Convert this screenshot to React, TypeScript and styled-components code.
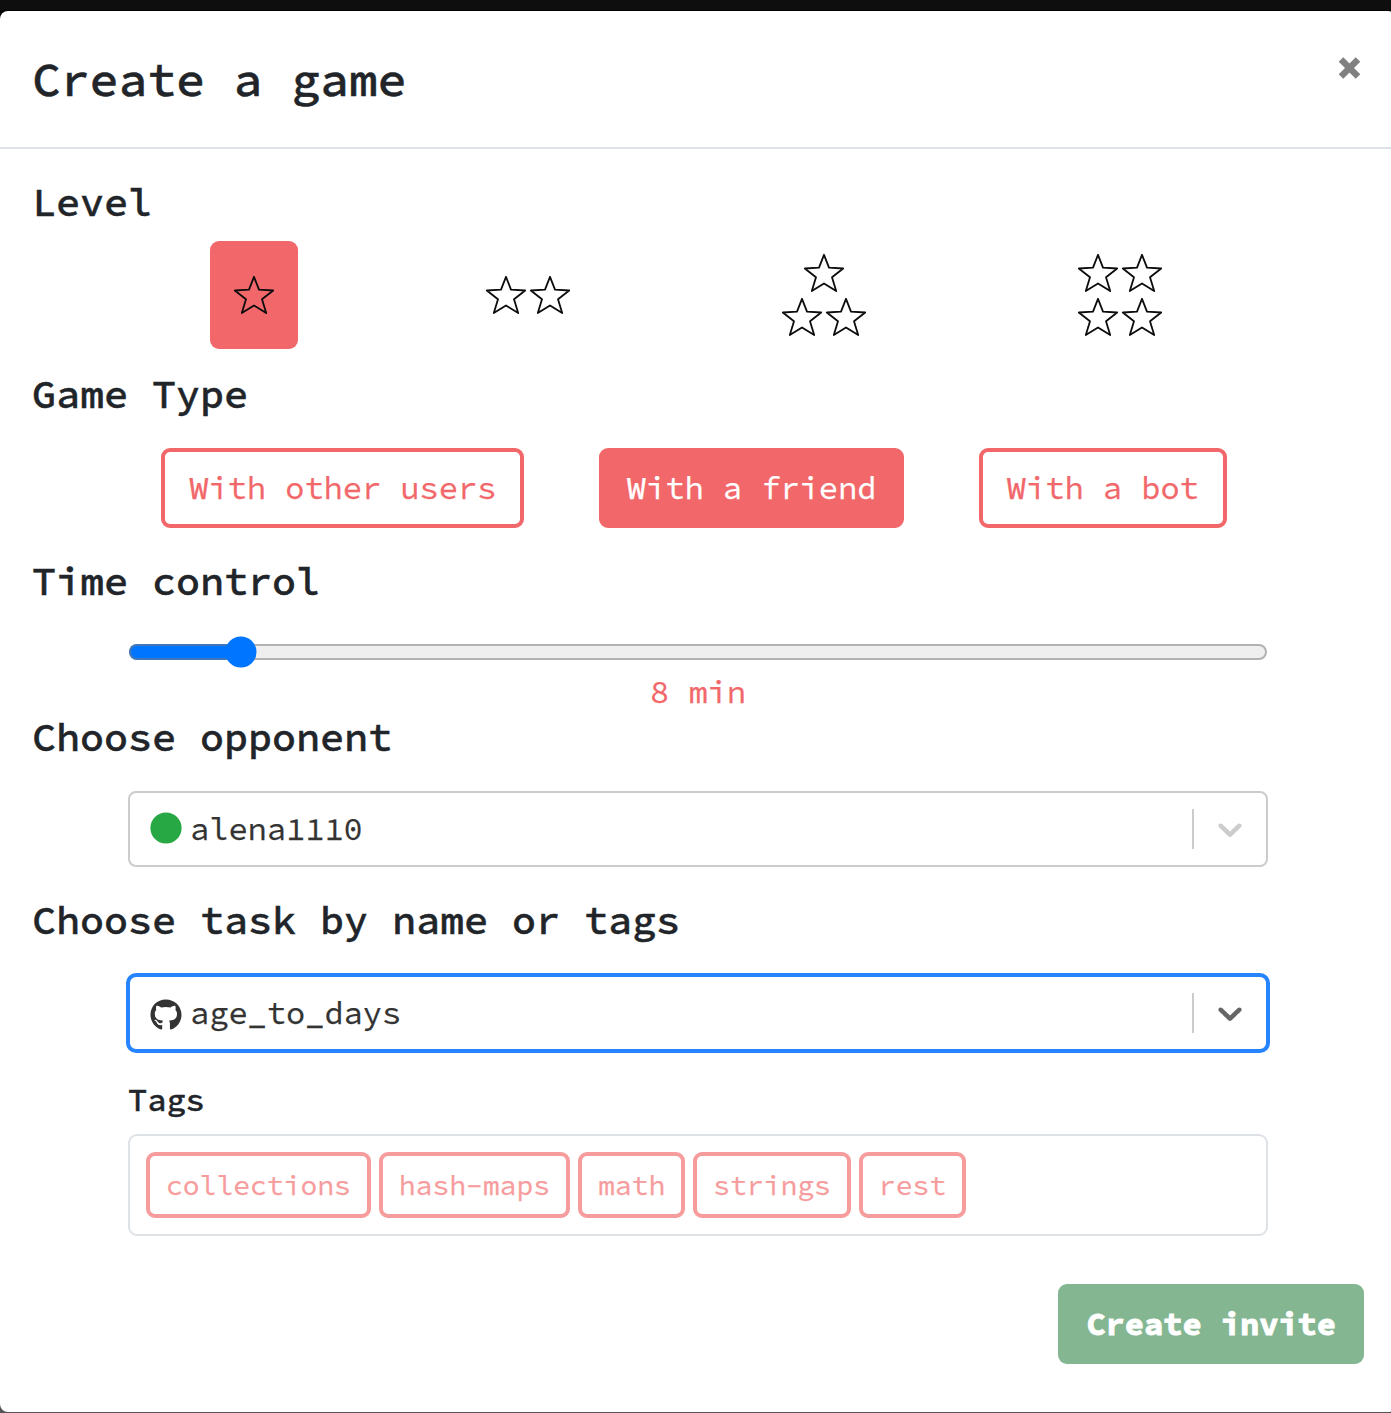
import React, { useState } from "react";
import styled, { createGlobalStyle, css } from "styled-components";

const RED = "#f2686a";
const INK = "#212529";

const GlobalStyle = createGlobalStyle`
  *, *::before, *::after { box-sizing: border-box; }
  html, body { margin: 0; padding: 0; }
  body {
    background: #0e0e0e;
    overflow: hidden;
    color: ${INK};
  }
  button { font: inherit; margin: 0; cursor: pointer; }
`;

const mono = (size: number, stroke = 0.25) => css`
  font-family: "Source Code Pro", "DejaVu Sans Mono", "Liberation Mono", monospace;
  font-size: ${size}px;
  white-space: pre;
  -webkit-text-stroke: ${stroke}px currentColor;
`;

const Page = styled.div`
  width: 1391px;
  height: 1413px;
  overflow: hidden;
  padding-top: 11px;
  background: linear-gradient(#0e0e0e 0 10px, #050305 10px 60px, #555 60px);
`;

const Dialog = styled.section`
  display: flex;
  flex-direction: column;
  width: 1396px;
  height: 1401px;
  background: #fff;
  border-radius: 8px;
`;

const Header = styled.header`
  display: flex;
  justify-content: space-between;
  align-items: flex-start;
  height: 138px;
  padding: 32px 34px 0 32px;
  border-bottom: 2px solid #dee2e6;
`;

const Title = styled.h1`
  ${mono(48, 0.5)}
  margin: 0;
  line-height: 72px;
  font-weight: 500;
`;

const CloseButton = styled.button`
  display: flex;
  margin-top: 13px;
  padding: 0;
  border: 0;
  background: none;
  color: #808080;
`;

const Body = styled.div`
  flex: 1;
  padding: 29px 32px 0;
`;

const Heading = styled.h2<{ $top?: number }>`
  ${mono(40, 0.5)}
  margin: ${(p) => p.$top ?? 0}px 0 0;
  line-height: 48px;
  font-weight: 500;
`;

const Field = styled.div<{ $top: number }>`
  margin: ${(p) => p.$top}px 96px 0;
`;

const Levels = styled(Field)`
  display: flex;
  justify-content: space-around;
`;

const LevelButton = styled.button<{ $active: boolean; $wide: boolean }>`
  display: flex;
  flex-wrap: wrap;
  justify-content: center;
  align-content: center;
  width: ${(p) => (p.$wide ? 132 : 88)}px;
  height: 108px;
  padding: 10px 22px;
  border: 0;
  border-radius: 9px;
  background: ${(p) => (p.$active ? RED : "transparent")};
`;

const LineBreak = styled.span`
  flex-basis: 100%;
`;

const GameTypes = styled.div`
  display: flex;
  justify-content: space-around;
  margin: 30px 100px 0 92px;
`;

const TypeButton = styled.button<{ $active: boolean }>`
  ${mono(32)}
  height: 80px;
  padding: 0 24px;
  border: 4px solid ${RED};
  border-radius: 9px;
  line-height: 72px;
  color: ${(p) => (p.$active ? "#fff" : RED)};
  background: ${(p) => (p.$active ? RED : "#fff")};
`;

const Slider = styled.div`
  display: flex;
  align-items: center;
  height: 32px;
  padding: 0 1px;
`;

const Track = styled.div`
  display: flex;
  align-items: center;
  width: 100%;
  height: 16px;
  border: 2px solid #b2b2b2;
  border-radius: 8px;
  background: #efefef;
`;

const TrackFill = styled.div`
  flex: none;
  height: 16px;
  margin-left: -2px;
  border: 2px solid #3f78bd;
  border-right: 0;
  border-radius: 8px 0 0 8px;
  background: #0075ff;
`;

const Thumb = styled.svg`
  flex: none;
  width: 32px;
  height: 32px;
  margin-left: -16px;
  fill: #0075ff;
`;

const SliderValue = styled.div`
  ${mono(32)}
  line-height: 48px;
  text-align: center;
  color: ${RED};
`;

const Select = styled.div<{ $focused?: boolean }>`
  display: flex;
  align-items: center;
  height: ${(p) => (p.$focused ? 80 : 76)}px;
  margin: ${(p) => (p.$focused ? -2 : 0)}px;
  padding: 0 16px 0 20px;
  border: ${(p) => (p.$focused ? "4px solid #2684ff" : "2px solid #ccc")};
  border-radius: ${(p) => (p.$focused ? 10 : 8)}px;
  color: #333;
`;

const SelectText = styled.span`
  ${mono(32)}
  flex: 1;
  margin-left: 8px;
  line-height: 48px;
`;

const Separator = styled.span`
  width: 2px;
  height: 40px;
  margin-right: 16px;
  background: #ccc;
`;

const StatusIcon = styled.svg`
  width: 32px;
  height: 32px;
  margin-top: 2px;
  fill: currentColor;
`;

const Dot = styled(StatusIcon)`
  margin: 0 0 2px;
  color: #28a745;
`;

const TagsLabel = styled.h3`
  ${mono(32, 0.4)}
  margin: 25px 0 10px;
  line-height: 48px;
  font-weight: 500;
`;

const TagBox = styled.div`
  display: flex;
  gap: 8px;
  padding: 16px;
  border: 2px solid #dee2e6;
  border-radius: 9px;
`;

const Tag = styled.button`
  ${mono(28)}
  height: 66px;
  padding: 0 16px;
  border: 4px solid ${RED};
  border-radius: 9px;
  background: #fff;
  line-height: 58px;
  color: ${RED};
  opacity: 0.65;
`;

const Footer = styled.footer`
  display: flex;
  justify-content: flex-end;
  margin-top: 48px;
`;

const InviteButton = styled.button`
  ${mono(32, 0.9)}
  height: 80px;
  padding: 0 28px;
  border: 0;
  border-radius: 9px;
  background: #84b692;
  color: #fff;
  font-weight: 700;
  line-height: 80px;
`;

const Star = () => (
  <svg width="44" height="44" viewBox="0 0 44 44" fill="none" stroke="#0c0c0c" strokeWidth="1.8" strokeLinejoin="round">
    <path d="M22 3.8 27 16.7 41.2 17.5 30 26.3 34.2 40.1 22 32.5 9.8 40.1 14 26.3 2.8 17.5 17 16.7Z" />
  </svg>
);

const CloseIcon = () => (
  <svg width="24" height="24" viewBox="0 0 24 24" stroke="currentColor" strokeWidth="6.4">
    <path d="M3 3.5 20 20.5M20 3.5 3 20.5" />
  </svg>
);

const GithubIcon = () => (
  <StatusIcon viewBox="-8 -22 512 512">
    <path d="M244.800 0C106.100 0 0 105.300 0 244c0 110.900 69.800 205.800 169.500 239.200 12.800 2.300 17.300-5.600 17.300-12.100 0-6.200-.3-40.400-.3-61.400 0 0-70 15-84.700-29.800 0 0-11.400-29.100-27.800-36.600 0 0-22.900-15.700 1.600-15.400 0 0 24.900 2 38.600 25.800 21.900 38.600 58.600 27.500 72.900 20.900 2.300-16 8.800-27.100 16-33.700-64-6.200-134-14.300-134-110.500 0-27.500 7.600-41.300 23.600-58.900-2.600-6.500-11.100-33.300 2.600-67.900 20.900-6.500 80 27 80 27 20-5.600 47-8.500 70-8.500s50 2.900 70 8.500c0 0 59.100-33.600 80-27 13.700 34.700 5.200 61.400 2.600 67.900 16 17.700 26 31.500 26 58.900 0 96.500-66 104.200-129.700 110.500 9.200 7.900 17 22.900 17 46.400 0 33.700-.3 75.400-.3 83.600 0 6.500 4.600 14.400 17.300 12.100C428.200 449.800 496 354.900 496 244 496 105.300 383.500 0 244.800 0z" />
  </StatusIcon>
);

const Chevron = ({ color }: { color: string }) => (
  <svg width="40" height="40" viewBox="0 0 20 20" fill={color}>
    <path d="M4.516 7.548c0.436-0.446 1.043-0.481 1.576 0l3.908 3.747 3.908-3.747c0.533-0.481 1.141-0.446 1.574 0 0.436 0.445 0.408 1.197 0 1.615-0.406 0.418-4.695 4.502-4.695 4.502-0.217 0.223-0.502 0.335-0.787 0.335s-0.57-0.112-0.789-0.335c0 0-4.287-4.084-4.695-4.502s-0.436-1.17 0-1.615z" />
  </svg>
);

const gameTypes = ["With other users", "With a friend", "With a bot"];
const tags = ["collections", "hash-maps", "math", "strings", "rest"];

export default function App() {
  const [level, setLevel] = useState(1);
  const [gameType, setGameType] = useState("With a friend");

  return (
    <>
      <GlobalStyle />
      <Page>
        <Dialog>
          <Header>
            <Title>Create a game</Title>
            <CloseButton aria-label="Close">
              <CloseIcon />
            </CloseButton>
          </Header>
          <Body>
            <Heading>Level</Heading>
            <Levels $top={15}>
              {[1, 2, 3, 4].map((n) => (
                <LevelButton key={n} $active={n === level} $wide={n > 1} onClick={() => setLevel(n)}>
                  {Array.from({ length: n }, (_, i) => (
                    <React.Fragment key={i}>
                      <Star />
                      {n === 3 && i === 0 && <LineBreak />}
                    </React.Fragment>
                  ))}
                </LevelButton>
              ))}
            </Levels>

            <Heading $top={21}>Game Type</Heading>
            <GameTypes>
              {gameTypes.map((t) => (
                <TypeButton key={t} $active={t === gameType} onClick={() => setGameType(t)}>
                  {t}
                </TypeButton>
              ))}
            </GameTypes>

            <Heading $top={29}>Time control</Heading>
            <Field $top={31}>
              <Slider>
                <Track>
                  <TrackFill style={{ width: 112 }} />
                  <Thumb viewBox="0 0 32 32">
                    <circle cx="15.9" cy="16" r="15.6" />
                  </Thumb>
                </Track>
              </Slider>
              <SliderValue>8 min</SliderValue>
            </Field>

            <Heading $top={-3}>Choose opponent</Heading>
            <Field $top={30}>
              <Select>
                <Dot viewBox="0 0 32 32">
                  <circle cx="16" cy="16" r="15.6" />
                </Dot>
                <SelectText>alena1110</SelectText>
                <Separator />
                <Chevron color="#ccc" />
              </Select>
            </Field>

            <Heading $top={29}>Choose task by name or tags</Heading>
            <Field $top={31}>
              <Select $focused>
                <GithubIcon />
                <SelectText>age_to_days</SelectText>
                <Separator />
                <Chevron color="#666" />
              </Select>
              <TagsLabel>Tags</TagsLabel>
              <TagBox>
                {tags.map((t) => (
                  <Tag key={t}>{t}</Tag>
                ))}
              </TagBox>
            </Field>

            <Footer>
              <InviteButton>Create invite</InviteButton>
            </Footer>
          </Body>
        </Dialog>
      </Page>
    </>
  );
}
